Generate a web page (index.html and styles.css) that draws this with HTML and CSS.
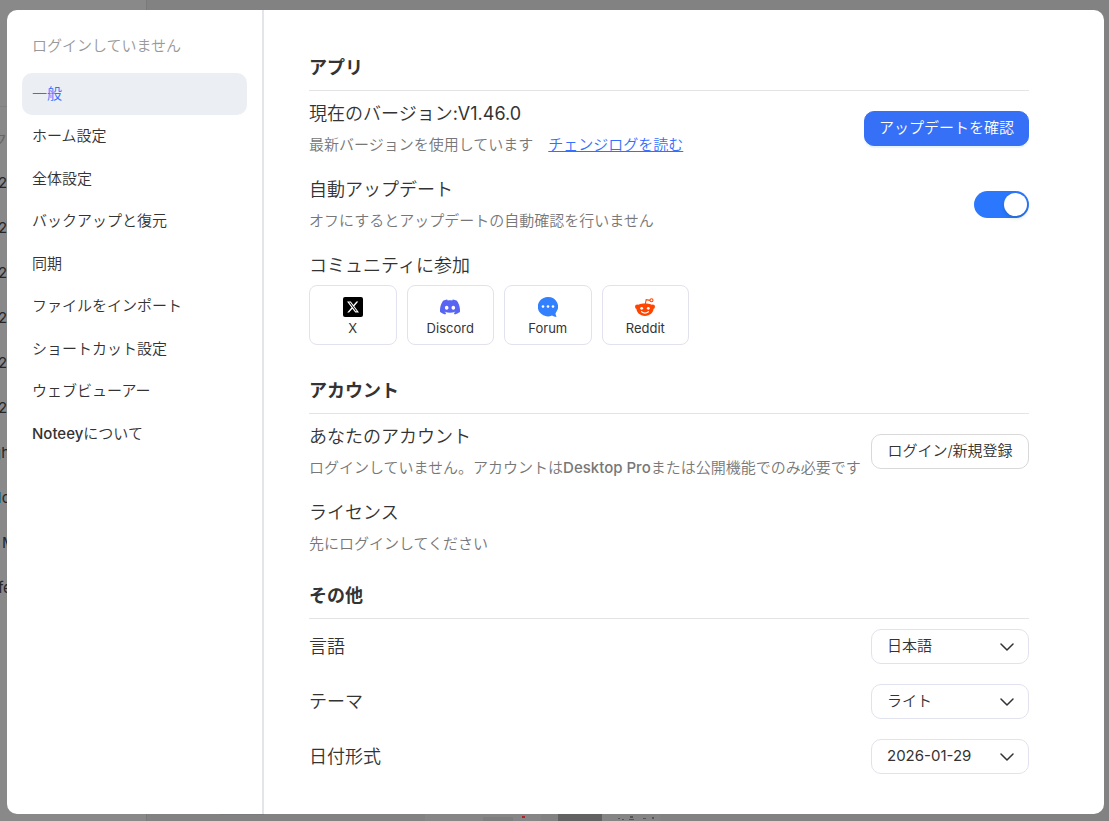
FILE: index.html
```html
<!DOCTYPE html>
<html lang="ja">
<head>
<meta charset="utf-8">
<meta name="viewport" content="width=device-width, initial-scale=1">
<title>Noteey 設定</title>
<link rel="stylesheet" href="styles.css">
</head>
<body>
<div class="backdrop" aria-hidden="true">
  <div class="backdrop-side">
    <div class="backdrop-search">ク</div>
    <div class="backdrop-row">2</div>
    <div class="backdrop-row">2</div>
    <div class="backdrop-row">2</div>
    <div class="backdrop-row">2</div>
    <div class="backdrop-row">2</div>
    <div class="backdrop-row">2</div>
    <div class="backdrop-row outdent"><span class="backdrop-mark">g</span>h</div>
    <div class="backdrop-row"><span class="backdrop-mark">l</span>o</div>
    <div class="backdrop-row indent">M</div>
    <div class="backdrop-row">fe</div>
  </div>
  <div class="backdrop-main">
    <svg class="backdrop-board" width="560" height="7" viewBox="0 0 560 7">
      <path fill="#7b7b7e" d="M73 0h44v1H73z"/>
      <path fill="#868686" d="M278 0h116v7H278z"/>
      <path fill="#7e7e7e" d="M336 3h30v4h-30z"/>
      <path fill="#b3202c" d="M375 2h3v2h-3z"/>
      <path fill="#626262" d="M411 0h44v7h-44z"/>
      <path fill="#858585" d="M455 0h58v7h-58z"/>
      <path fill="#555" d="M471 4h2v1h-2zM475 5h2v1h-2zM483 2h3v2h-3zM482 5h5v1h-5zM496 4h3v1h-3zM505 3h2v2h-2z"/>
    </svg>
  </div>
</div>

<div class="dialog" role="dialog" aria-label="設定">
  <aside class="sidebar">
    <p class="user">ログインしていません</p>
    <nav class="nav">
      <a class="nav-item active" href="#general" aria-current="page">一般</a>
      <a class="nav-item" href="#home">ホーム設定</a>
      <a class="nav-item" href="#global">全体設定</a>
      <a class="nav-item" href="#backup">バックアップと復元</a>
      <a class="nav-item" href="#sync">同期</a>
      <a class="nav-item" href="#import">ファイルをインポート</a>
      <a class="nav-item" href="#shortcuts">ショートカット設定</a>
      <a class="nav-item" href="#viewer">ウェブビューアー</a>
      <a class="nav-item" href="#about"><span class="product">Noteey</span>について</a>
    </nav>
  </aside>

  <main class="content" id="general">
    <section class="section">
      <h2 class="heading">アプリ</h2>
      <div class="rows">
        <div class="row">
          <div class="info">
            <h3 class="title">現在のバージョン<span class="latin">:V1.46.0</span></h3>
            <p class="desc">最新バージョンを使用しています<a class="link" href="#changelog">チェンジログを読む</a></p>
          </div>
          <button class="button primary" type="button">アップデートを確認</button>
        </div>
        <div class="row">
          <div class="info">
            <h3 class="title"><label for="auto-update">自動アップデート</label></h3>
            <p class="desc" id="auto-update-desc">オフにするとアップデートの自動確認を行いません</p>
          </div>
          <input class="toggle" type="checkbox" role="switch" id="auto-update" aria-describedby="auto-update-desc" checked>
        </div>
        <div class="info">
          <h3 class="title">コミュニティに参加</h3>
          <div class="cards">
            <a class="card" href="#x">
              <svg width="20" height="20" viewBox="0 0 20 20"><rect width="20" height="20" rx="2"/><path fill="#fff" transform="translate(4 4) scale(.5)" d="M18.901 1.153h3.68l-8.04 9.19L24 22.846h-7.406l-5.8-7.584-6.638 7.584H.474l8.6-9.83L0 1.154h7.594l5.243 6.932ZM17.61 20.644h2.039L6.486 3.24H4.298Z"/></svg>
              X
            </a>
            <a class="card" href="#discord">
              <svg width="20" height="20" viewBox="0 0 24 24"><path fill="#5865f2" d="M20.317 4.3698a19.7913 19.7913 0 00-4.8851-1.5152.0741.0741 0 00-.0785.0371c-.211.3753-.4447.8648-.6083 1.2495-1.8447-.2762-3.68-.2762-5.4868 0-.1636-.3933-.4058-.8742-.6177-1.2495a.077.077 0 00-.0785-.037 19.7363 19.7363 0 00-4.8852 1.515.0699.0699 0 00-.0321.0277C.5334 9.0458-.319 13.5799.0992 18.0578a.0824.0824 0 00.0312.0561c2.0528 1.5076 4.0413 2.4228 5.9929 3.0294a.0777.0777 0 00.0842-.0276c.4616-.6304.8731-1.2952 1.226-1.9942a.076.076 0 00-.0416-.1057c-.6528-.2476-1.2743-.5495-1.8722-.8923a.077.077 0 01-.0076-.1277c.1258-.0943.2517-.1923.3718-.2914a.0743.0743 0 01.0776-.0105c3.9278 1.7933 8.18 1.7933 12.0614 0a.0739.0739 0 01.0785.0095c.1202.099.246.1981.3728.2924a.077.077 0 01-.0066.1276 12.2986 12.2986 0 01-1.873.8914.0766.0766 0 00-.0407.1067c.3604.698.7719 1.3628 1.225 1.9932a.076.076 0 00.0842.0286c1.961-.6067 3.9495-1.5219 6.0023-3.0294a.077.077 0 00.0313-.0552c.5004-5.177-.8382-9.6739-3.5485-13.6604a.061.061 0 00-.0312-.0286zM8.02 15.3312c-1.1825 0-2.1569-1.0857-2.1569-2.419 0-1.3332.9555-2.4189 2.157-2.4189 1.2108 0 2.1757 1.0952 2.1568 2.419 0 1.3332-.9555 2.4189-2.1569 2.4189zm7.9748 0c-1.1825 0-2.1569-1.0857-2.1569-2.419 0-1.3332.9554-2.4189 2.1569-2.4189 1.2108 0 2.1757 1.0952 2.1568 2.419 0 1.3332-.946 2.4189-2.1568 2.4189Z"/></svg>
              Discord
            </a>
            <a class="card" href="#forum">
              <svg width="20" height="20" viewBox="0 0 20 20"><path fill="#3380ff" d="M10 0a10 9.600 0 0 1 8 15.400c-.5.700-.6 1.100-.4 1.800l.9 2.800c-1.700-.1-3.200-.7-4.500-1.500A10 9.700 0 1 1 10 0z"/><g fill="#fff"><circle cx="5" cy="9.500" r="1.300"/><circle cx="10" cy="9.500" r="1.300"/><circle cx="15" cy="9.500" r="1.300"/></g></svg>
              Forum
            </a>
            <a class="card" href="#reddit">
              <svg width="20" height="20" viewBox="0 0 20 20"><g fill="#ff4500"><circle cx="2.300" cy="9.800" r="2.300"/><circle cx="17.700" cy="9.800" r="2.300"/><path d="M10 6.500c4.900 0 8.600 1.200 8.600 4.800 0 4.400-3.700 7.600-8.600 7.600s-8.600-3.200-8.600-7.600c0-3.600 3.700-4.800 8.600-4.800z"/></g><path fill="none" stroke="#ff4500" stroke-width="1.100" d="M10.300 7l.9-4.300 3.900.7"/><circle cx="16.500" cy="3.300" r="1.500" fill="#fff" stroke="#ff4500" stroke-width="1.100"/><circle cx="6.700" cy="11.300" r="1.400" fill="#fff"/><circle cx="13.300" cy="11.300" r="1.400" fill="#fff"/><path fill="none" stroke="#fff" stroke-width="1.200" stroke-linecap="round" d="M6.600 14.700c1.900 1.500 4.900 1.500 6.800 0"/></svg>
              Reddit
            </a>
          </div>
        </div>
      </div>
    </section>

    <section class="section">
      <h2 class="heading">アカウント</h2>
      <div class="rows">
        <div class="row">
          <div class="info">
            <h3 class="title">あなたのアカウント</h3>
            <p class="desc">ログインしていません。アカウントは<span class="product">Desktop Pro</span>または公開機能でのみ必要です</p>
          </div>
          <button class="button" type="button">ログイン/新規登録</button>
        </div>
        <div class="info">
          <h3 class="title">ライセンス</h3>
          <p class="desc">先にログインしてください</p>
        </div>
      </div>
    </section>

    <section class="section">
      <h2 class="heading">その他</h2>
      <div class="rows pickers">
        <div class="row">
          <label class="title" for="language">言語</label>
          <div class="picker">
            <select class="select" id="language"><option>日本語</option><option>English</option></select>
            <svg class="chevron" width="14" height="8" viewBox="0 0 14 8"><path d="M1 1l6 6 6-6"/></svg>
          </div>
        </div>
        <div class="row">
          <label class="title" for="theme">テーマ</label>
          <div class="picker">
            <select class="select" id="theme"><option>ライト</option><option>ダーク</option></select>
            <svg class="chevron" width="14" height="8" viewBox="0 0 14 8"><path d="M1 1l6 6 6-6"/></svg>
          </div>
        </div>
        <div class="row">
          <label class="title" for="date-format">日付形式</label>
          <div class="picker">
            <select class="select latin" id="date-format"><option>2026-01-29</option><option>01/29/2026</option></select>
            <svg class="chevron" width="14" height="8" viewBox="0 0 14 8"><path d="M1 1l6 6 6-6"/></svg>
          </div>
        </div>
      </div>
    </section>
  </main>
</div>
</body>
</html>
```
FILE: styles.css
```css
* {
  box-sizing: border-box;
}

body {
  margin: 0;
  display: grid;
  min-height: 100vh;
  background: #828282;
  color: #333;
  font-family: Inter, "Noto Sans CJK JP", sans-serif;
  font-size: 15px;
  font-weight: 350;
  line-height: 1.5;
}

h2,
h3,
p {
  margin: 0;
}

.latin {
  font-weight: 400;
}

.product {
  font-weight: 500;
}

/* Dimmed workspace behind the dialog */
.backdrop {
  grid-area: 1 / 1;
  display: flex;
  overflow: hidden;
}

.backdrop-side {
  width: 147px;
  padding-top: 106px;
  background: #898989;
  border-right: 1px solid #7a7a7a;
  color: #24262b;
  font-weight: 400;
}

.backdrop-search {
  height: 54px;
  margin-left: -8px;
  padding-top: 22px;
  border-top: 1px solid #808080;
  color: #666;
}

.backdrop-row {
  height: 45px;
  margin-left: -2px;
  line-height: 45px;
}

.backdrop-row.outdent {
  margin-left: -8px;
}

.backdrop-row.indent {
  margin-left: 2px;
}

.backdrop-mark {
  color: #1f5a96;
}

.backdrop-main {
  flex: 1;
  display: flex;
  align-items: flex-end;
}

.backdrop-board {
  display: block;
}

.dialog {
  grid-area: 1 / 1;
  z-index: 1;
  display: flex;
  margin: 10px 5px 7px 7px;
  border-radius: 10px;
  background: #fff;
  overflow: hidden;
}

.sidebar {
  flex: none;
  width: 257px;
  padding: 25px 15px;
  border-right: 2px solid #e2e6ea;
}

.user {
  padding: 0 10px 15px;
  color: #999;
}

.nav {
  display: flex;
  flex-direction: column;
}

.nav-item {
  padding: 10px;
  border-radius: 10px;
  color: #333;
  text-decoration: none;
}

.nav-item.active {
  background: #ebeff3;
  color: #3370ff;
}

.content {
  flex: 1;
  min-width: 0;
  display: flex;
  flex-direction: column;
  gap: 27px;
  padding: 44px 75px 40px 45px;
}

.heading {
  padding-bottom: 8px;
  border-bottom: 1px solid #e2e4e6;
  font-size: 18px;
  font-weight: 700;
  line-height: 28px;
}

.rows {
  display: flex;
  flex-direction: column;
  gap: 20px;
  padding-top: 9px;
}

.rows.pickers {
  padding-top: 10px;
}

.row {
  display: flex;
  align-items: center;
  justify-content: space-between;
}

.info {
  display: flex;
  flex-direction: column;
  gap: 6px;
}

.title {
  font-size: 18px;
  font-weight: 350;
  line-height: 27px;
}

.desc {
  color: #777;
  line-height: 23px;
  white-space: nowrap;
}

.link {
  margin-left: 15px;
  color: #3370ff;
}

.button {
  flex: none;
  min-width: 158px;
  height: 35px;
  padding: 0 14px;
  border: 1px solid #d9d9d9;
  border-radius: 10px;
  background: #fff;
  color: #333;
  font: inherit;
}

.button.primary {
  border-color: #3670f7;
  background: #3670f7;
  box-shadow: 0 2px 1px #e6f2ff;
  color: #fff;
}

.toggle {
  appearance: none;
  flex: none;
  display: flex;
  justify-content: flex-end;
  width: 55px;
  height: 27px;
  margin: 0;
  padding: 2px;
  border-radius: 14px;
  background: #2b78ff;
}

.toggle::before {
  content: "";
  width: 23px;
  height: 23px;
  border-radius: 50%;
  background: #fff;
  box-shadow: 0 2px 4px rgb(0 35 11 / 20%);
}

.toggle:not(:checked) {
  justify-content: flex-start;
  background: #bfbfbf;
}

.cards {
  display: grid;
  grid-template-columns: repeat(4, 1fr);
  gap: 10px;
  width: 380px;
  margin-bottom: 5px;
}

.card {
  display: flex;
  flex-direction: column;
  align-items: center;
  gap: 1px;
  height: 60px;
  padding-top: 11px;
  border: 1px solid #e2e2ee;
  border-radius: 8px;
  color: #333;
  font-size: 13px;
  font-weight: 400;
  line-height: 20px;
  text-decoration: none;
}

.picker {
  display: grid;
  align-items: center;
  width: 158px;
}

.select {
  grid-area: 1 / 1;
  appearance: none;
  height: 35px;
  padding: 0 40px 0 15px;
  border: 1px solid #e2e2ee;
  border-radius: 10px;
  background: #fff;
  color: #333;
  font: inherit;
}

.select.latin {
  font-weight: 400;
}

.chevron {
  grid-area: 1 / 1;
  justify-self: end;
  margin-right: 15px;
  fill: none;
  stroke: #333;
  stroke-width: 1.5;
  stroke-linecap: round;
  stroke-linejoin: round;
  pointer-events: none;
}
```
